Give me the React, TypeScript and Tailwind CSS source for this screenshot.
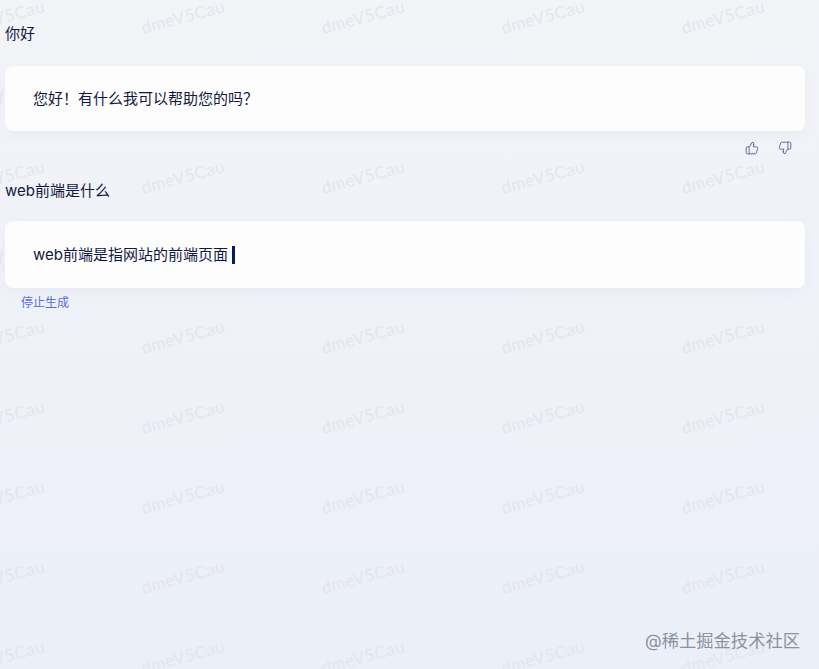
import { ThumbsUp, ThumbsDown } from 'lucide-react'

const FONT = "font-['Inter','Noto_Sans_CJK_SC',sans-serif]"

function Watermark() {
  const cells = Array.from({ length: 54 })
  return (
    <div className="absolute inset-0 overflow-hidden pointer-events-none">
      <div className="grid grid-cols-[repeat(6,180px)] auto-rows-[80px] w-[1080px] ml-[-87px] mt-[-24px]">
        {cells.map((_, i) => (
          <div key={i} className="flex items-center justify-center h-[80px]">
            <span className="-rotate-[15deg] text-[17px] leading-none tracking-[0.5px] text-[#e4e6ed] font-['Lato',sans-serif]">
              dmeV5Cau
            </span>
          </div>
        ))}
      </div>
    </div>
  )
}

export default function App() {
  return (
    <div className={`relative w-[819px] h-[669px] overflow-hidden bg-gradient-to-b from-[#f3f4f8] to-[#ebeff8] text-[#12173f] text-[15px] ${FONT}`}>
      <Watermark />

      <div className="relative pl-[5px] pr-[14px] pt-[24px]">
        <p className="leading-[20px]">你好</p>

        <div className="mt-[22px] h-[65px] rounded-lg bg-white/85 px-[28px] flex items-center shadow-[0_4px_12px_rgba(120,130,190,0.06)]">
          <p className="leading-[20px]">{'您好\uFF01有什么我可以帮助您的吗\uFF1F'}</p>
        </div>

        <div className="flex justify-end items-center gap-[19px] mt-[10px] pr-[13px] h-[14px] text-[#5f6690]">
          <ThumbsUp size={14} strokeWidth={1.6} />
          <ThumbsDown size={14} strokeWidth={1.6} />
        </div>

        <p className="mt-[26px] leading-[20px]">web前端是什么</p>

        <div className="mt-[20px] h-[67px] rounded-lg bg-white/85 px-[28px] flex items-center shadow-[0_4px_12px_rgba(120,130,190,0.06)]">
          <p className="leading-[20px] flex items-center">
            web前端是指网站的前端页面
            <span className="ml-[4px] w-[3px] h-[18px] bg-[#10185c]" />
          </p>
        </div>

        <button className="block mt-[7px] ml-[16px] text-[12px] leading-[16px] text-[#5a6bdc]">停止生成</button>
      </div>

      <div className="absolute right-[19px] bottom-[17px] text-[17.3px] leading-[22px] text-[#8d919c]">@稀土掘金技术社区</div>
    </div>
  )
}
